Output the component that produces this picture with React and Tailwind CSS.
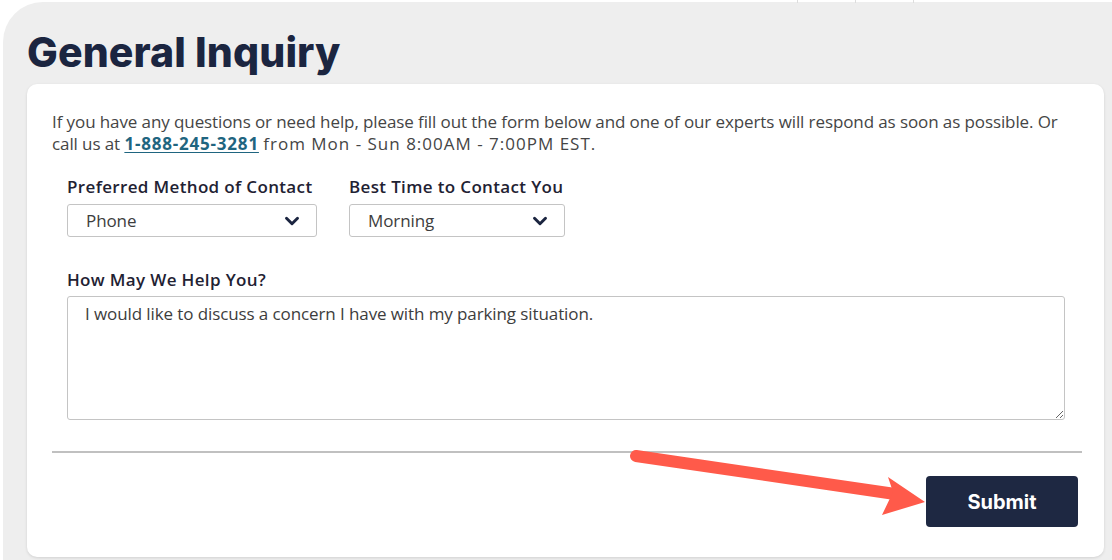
import React from 'react';
import { ChevronDown } from 'lucide-react';

const body = { fontFamily: '"Open Sans", Lato, sans-serif' };

function Select({ value, width }) {
  return (
    <div
      className={`flex items-center justify-between h-[33px] pl-[18px] pr-[13px] border border-[#c4c4c4] rounded-[3px] bg-white ${width}`}
    >
      <span className="text-[17px] text-[#3d3d3d] tracking-[-0.1px]">{value}</span>
      <ChevronDown className="w-[22px] h-[22px] text-[#1b2540]" strokeWidth={3.2} />
    </div>
  );
}

export default function App() {
  return (
    <div className="relative w-[1112px] h-[560px] bg-white overflow-hidden" style={body}>
      <div className="absolute left-[797px] top-0 w-px h-[3px] bg-[#dddddd]" />
      <div className="absolute left-[855px] top-0 w-px h-[3px] bg-[#dddddd]" />
      <div className="absolute left-[913px] top-0 w-px h-[3px] bg-[#dddddd]" />

      <div className="ml-[3px] mt-[2px] h-[600px] bg-[#eeeeee] rounded-tl-[40px] pl-[24px] pr-[8px]">
        <h1
          className="pt-[26px] h-[82px] text-[41px] leading-[48px] font-extrabold text-[#1b2540] tracking-[0.1px]"
          style={{ fontFamily: 'Inter, sans-serif' }}
        >
          General Inquiry
        </h1>

        <div className="relative h-[473px] bg-white rounded-[10px] shadow-[0_1px_3px_rgba(0,0,0,0.12)] pl-[25px] pr-[24px] pt-[27px]">
          <p className="text-[17px] leading-[22px] text-[#454545] tracking-[-0.1px]">
            If you have any questions or need help, please fill out the form below and one of our experts will respond as soon as possible. Or
            <br />
            call us at{' '}
            <a href="#" className="font-bold text-[#1f6580] underline underline-offset-2 tracking-[0.8px]">
              1-888-245-3281
            </a>{' '}
            <span className="tracking-[1px]">from Mon - Sun 8:00AM - 7:00PM EST.</span>
          </p>

          <div className="pl-[15px] pr-[15px]">
            <div className="flex gap-[32px] mt-[22px]">
              <div className="flex flex-col gap-[7px]">
                <label className="text-[17px] leading-[20px] font-semibold text-[#1f2233] tracking-[0.35px]">Preferred Method of Contact</label>
                <Select value="Phone" width="w-[250px]" />
              </div>
              <div className="flex flex-col gap-[7px]">
                <label className="text-[17px] leading-[20px] font-semibold text-[#1f2233] tracking-[0.35px]">Best Time to Contact You</label>
                <Select value="Morning" width="w-[216px]" />
              </div>
            </div>

            <div className="flex flex-col gap-[6px] mt-[33px]">
              <label className="text-[17px] leading-[20px] font-semibold text-[#1f2233] tracking-[0.35px]">How May We Help You?</label>
              <textarea
                readOnly
                value="I would like to discuss a concern I have with my parking situation."
                className="w-[998px] h-[124px] border border-[#c4c4c4] rounded-[3px] px-[17px] py-[6px] text-[17px] leading-[22px] text-[#3d3d3d] outline-none tracking-[-0.1px]"
              />
            </div>
          </div>

          <hr className="mt-[31px] -mr-[2px] border-t-2 border-[#c0c0c0]" />

          <div className="flex justify-end mt-[23px] pr-[2px]">
            <button className="w-[152px] h-[51px] rounded-[4px] bg-[#1e2842] text-white text-[20px] font-bold" style={{ fontFamily: 'Inter, sans-serif' }}>
              Submit
            </button>
          </div>

          <svg className="absolute left-0 top-0 pointer-events-none" width="1080" height="473" viewBox="27 84 1080 473">
            <line x1="636" y1="456" x2="895" y2="494" stroke="#ff5a4a" strokeWidth="12" strokeLinecap="round" />
            <polygon points="888,477 925,502 882,515 893,492" fill="#ff5a4a" />
          </svg>
        </div>
      </div>
    </div>
  );
}
